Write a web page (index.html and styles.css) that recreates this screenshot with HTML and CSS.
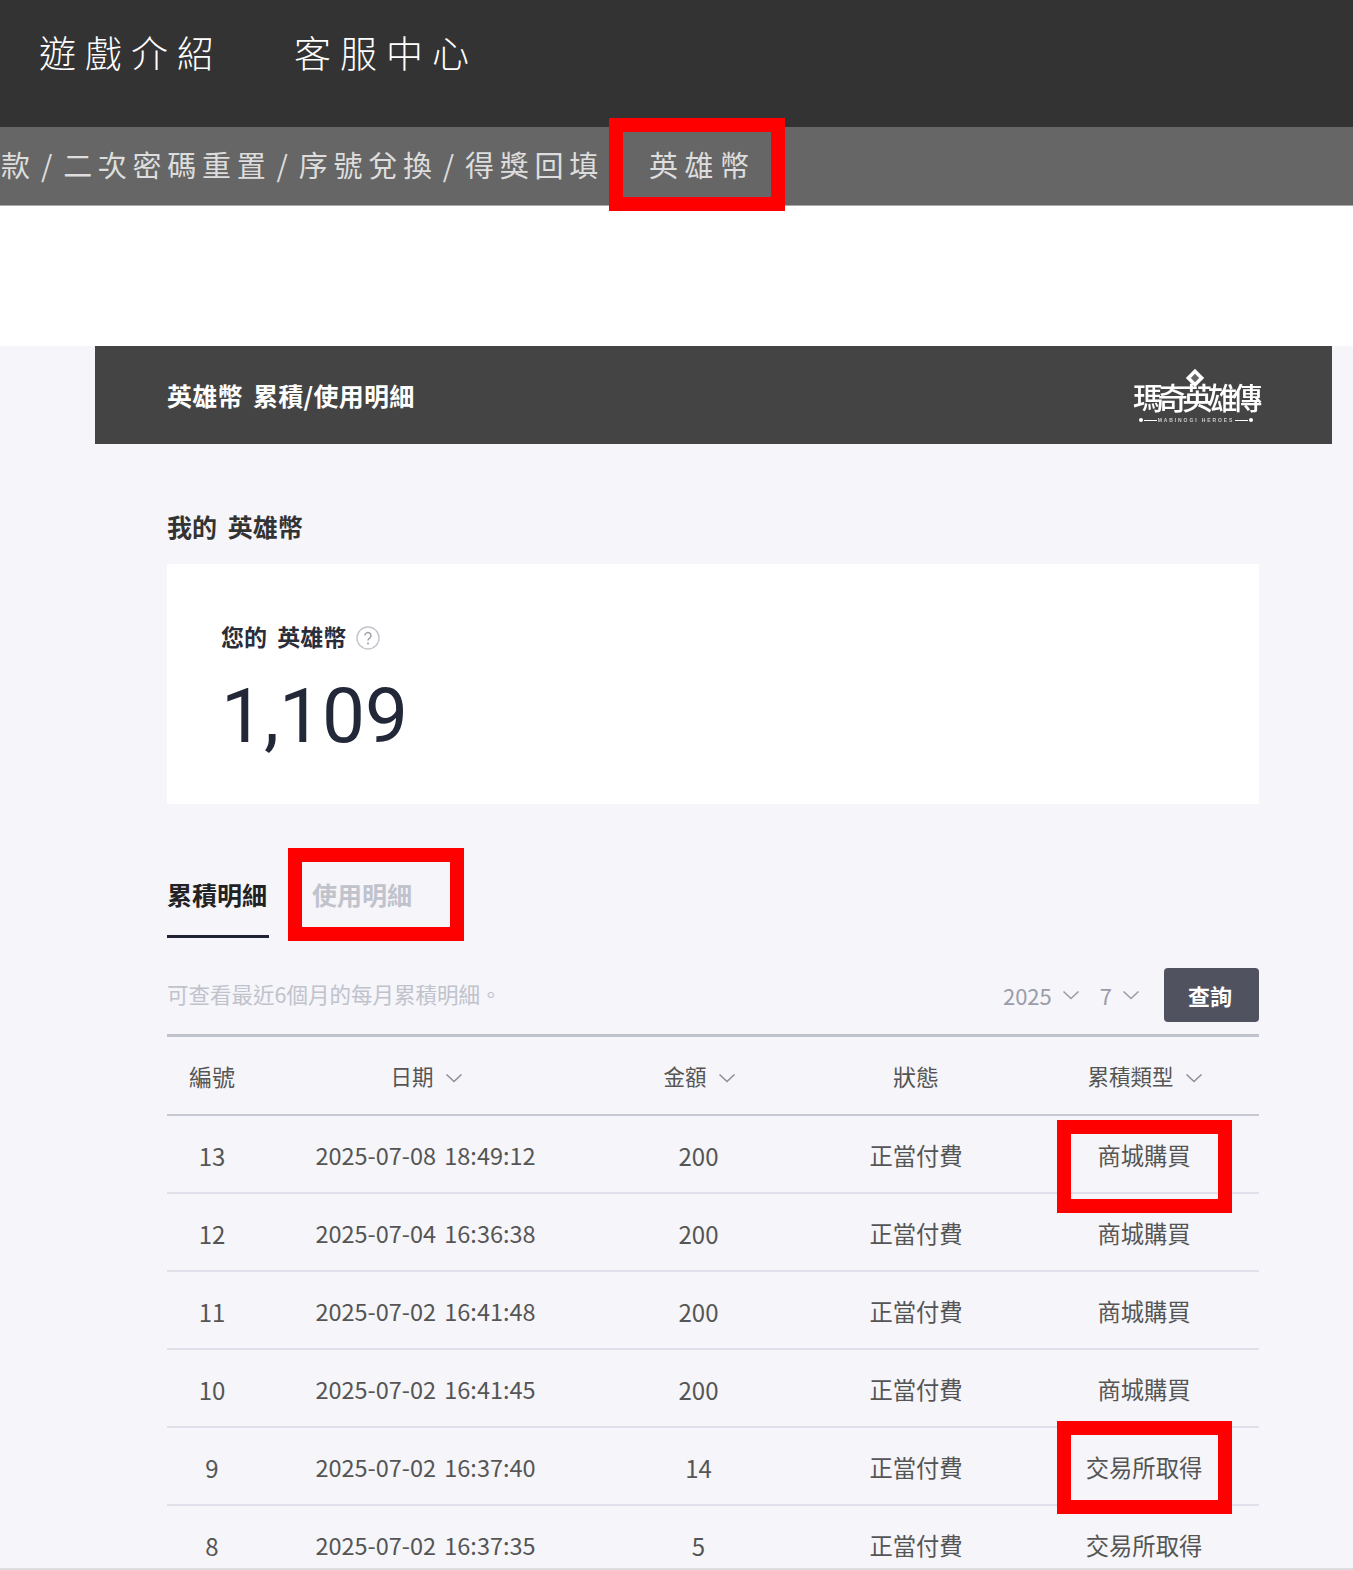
FILE: index.html
```html
<!DOCTYPE html>
<html lang="zh-Hant">
<head>
<meta charset="utf-8">
<title>英雄幣 累積/使用明細</title>
<link rel="stylesheet" href="styles.css">
</head>
<body>
<div class="page">
  <header class="top-nav">
    <a class="top-link">遊戲介紹</a>
    <a class="top-link">客服中心</a>
  </header>
  <nav class="sub-nav">
    <span class="sub-trail">款 / 二次密碼重置 / 序號兌換 / 得獎回填</span>
    <span class="sub-active">英雄幣</span>
  </nav>
  <div class="spacer"></div>
  <main class="content">
    <div class="panel">
      <div class="banner">
        <h1 class="banner-title">英雄幣 累積/使用明細</h1>
        <div class="logo">
          <svg class="logo-mark" viewBox="0 0 24 24" width="20" height="20" aria-hidden="true">
            <path d="M12 1 23 12 12 23 1 12Z" fill="#fff"/>
            <path d="M12 7 17 12 12 17 7 12Z" fill="#666"/>
          </svg>
          <div class="logo-name">瑪奇英雄傳</div>
          <div class="logo-tag"><i class="logo-dot"></i><i class="logo-line"></i><span>MABINOGI HEROES</span><i class="logo-line"></i><i class="logo-dot"></i></div>
        </div>
      </div>
      <div class="body">
        <h2 class="section-title">我的 英雄幣</h2>
        <section class="balance-card">
          <div class="balance-label"><span>您的 英雄幣</span><svg class="help" viewBox="0 0 24 24" width="24" height="24" aria-hidden="true">
              <circle cx="12" cy="12" r="11" fill="none" stroke="#c4c6ce" stroke-width="1.4"/>
              <path d="M9 9.6a3 3 0 1 1 4.600 2.500c-1 .7-1.600 1.200-1.600 2.400" fill="none" stroke="#9a9ca6" stroke-width="1.4"/>
              <circle cx="12" cy="17.6" r="1" fill="#9a9ca6"/>
            </svg></div>
          <div class="balance-value">1,109</div>
        </section>
        <div class="tabs">
          <div class="tab tab-active">累積明細</div>
          <div class="tab">使用明細</div>
        </div>
        <div class="filter">
          <p class="filter-note">可查看最近6個月的每月累積明細。</p>
          <div class="filter-controls">
            <span class="select">2025
              <svg class="chev" viewBox="0 0 18 10" width="18" height="10"><path d="M1.500 1.500 9 8.500 16.500 1.500" fill="none" stroke="#9a9ca6" stroke-width="1.6"/></svg>
            </span>
            <span class="select">7
              <svg class="chev" viewBox="0 0 18 10" width="18" height="10"><path d="M1.500 1.500 9 8.500 16.500 1.500" fill="none" stroke="#9a9ca6" stroke-width="1.6"/></svg>
            </span>
            <button class="query">查詢</button>
          </div>
        </div>
        <table class="ledger">
          <colgroup>
            <col class="c1"><col class="c2"><col class="c3"><col class="c4"><col class="c5">
          </colgroup>
          <thead>
            <tr>
              <th class="plain">編號</th>
              <th>日期 <svg class="chev" viewBox="0 0 18 10" width="18" height="10"><path d="M1.500 1.500 9 8.500 16.500 1.500" fill="none" stroke="#8d8f99" stroke-width="1.600"/></svg></th>
              <th>金額 <svg class="chev" viewBox="0 0 18 10" width="18" height="10"><path d="M1.500 1.500 9 8.500 16.500 1.500" fill="none" stroke="#8d8f99" stroke-width="1.600"/></svg></th>
              <th class="plain">狀態</th>
              <th>累積類型 <svg class="chev" viewBox="0 0 18 10" width="18" height="10"><path d="M1.500 1.500 9 8.500 16.500 1.500" fill="none" stroke="#8d8f99" stroke-width="1.600"/></svg></th>
            </tr>
          </thead>
          <tbody>
            <tr><td>13</td><td class="when">2025-07-08 18:49:12</td><td>200</td><td class="zh">正當付費</td><td class="zh">商城購買</td></tr>
            <tr><td>12</td><td class="when">2025-07-04 16:36:38</td><td>200</td><td class="zh">正當付費</td><td class="zh">商城購買</td></tr>
            <tr><td>11</td><td class="when">2025-07-02 16:41:48</td><td>200</td><td class="zh">正當付費</td><td class="zh">商城購買</td></tr>
            <tr><td>10</td><td class="when">2025-07-02 16:41:45</td><td>200</td><td class="zh">正當付費</td><td class="zh">商城購買</td></tr>
            <tr><td>9</td><td class="when">2025-07-02 16:37:40</td><td>14</td><td class="zh">正當付費</td><td class="zh">交易所取得</td></tr>
            <tr><td>8</td><td class="when">2025-07-02 16:37:35</td><td>5</td><td class="zh">正當付費</td><td class="zh">交易所取得</td></tr>
          </tbody>
        </table>
      </div>
    </div>
  </main>
  <div class="mark mark-nav"></div>
  <div class="mark mark-tab"></div>
  <div class="mark mark-row mark-row1"></div>
  <div class="mark mark-row mark-row5"></div>
  <div class="bottom-edge"></div>
</div>
</body>
</html>
```
FILE: styles.css
```css
* { box-sizing: border-box; }
html, body { margin: 0; padding: 0; }
body {
  font-family: "Noto Sans CJK TC", "Noto Sans", sans-serif;
  background: #f5f5fa;
}
.page {
  position: relative;
  width: 1353px;
  height: 1570px;
  overflow: hidden;
  display: flex;
  flex-direction: column;
}
.top-nav {
  height: 127px;
  flex: none;
  background: #333;
  display: flex;
  gap: 71px;
  padding: 28px 0 0 39px;
}
.top-link {
  color: #fff;
  font-size: 37px;
  font-weight: 300;
  letter-spacing: 9px;
  line-height: 48px;
}
.sub-nav {
  height: 79px;
  flex: none;
  background: #666;
  border-bottom: 1px solid #aaa;
  display: flex;
  align-items: center;
  padding: 0 0 4px 1px;
  white-space: nowrap;
}
.sub-trail, .sub-active {
  color: #ddd;
  font-size: 29px;
  font-weight: 400;
  letter-spacing: 5.700px;
  line-height: 40px;
}
.sub-trail { word-spacing: -7px; }
.sub-active { margin-left: 45px; letter-spacing: 6.500px; }
.spacer { height: 140px; flex: none; background: #fff; }
.content {
  flex: 1;
  min-height: 0;
  padding: 0 21px 0 95px;
  background: #f5f5fa;
}
.banner {
  height: 98px;
  background: #444;
  display: flex;
  align-items: center;
  justify-content: space-between;
  padding: 0 73px 0 72px;
}
.banner-title {
  margin: 0;
  color: #fff;
  font-size: 25px;
  font-weight: 700;
  line-height: 32px;
  letter-spacing: 0.300px;
  word-spacing: 4px;
}
.logo {
  width: 126px;
  height: 60px;
  margin-top: 6px;
  position: relative;
  display: flex;
  flex-direction: column;
  align-items: center;
  filter: blur(0.4px);
}
.logo-mark { position: absolute; top: 0; left: 52px; }
.logo-name {
  width: 126px;
  margin-top: 13px;
  color: #fff;
  font-size: 30px;
  font-weight: 500;
  letter-spacing: -5.200px;
  line-height: 30px;
  white-space: nowrap;
}
.logo-tag {
  margin-top: 5px;
  display: flex;
  align-items: center;
  color: #ccc;
  font: 700 5px/8px "Liberation Sans", sans-serif;
  letter-spacing: 1.900px;
  white-space: nowrap;
}
.logo-line { width: 13px; height: 1px; background: #fff; margin: 0 1px; }
.logo-dot { width: 4px; height: 4px; border-radius: 50%; background: #fff; }
.body { padding: 0 73px 0 72px; }
.section-title {
  margin: 0;
  padding-top: 64px;
  color: #333;
  font-size: 25px;
  font-weight: 700;
  line-height: 36px;
  word-spacing: 5px;
}
.balance-card {
  margin-top: 20px;
  height: 240px;
  background: #fff;
  padding: 56px 0 0 54px;
}
.balance-label {
  display: flex;
  align-items: center;
  gap: 10px;
  color: #2a2d3a;
  font-size: 23px;
  font-weight: 700;
  line-height: 32px;
  word-spacing: 5px;
}
.help { margin-top: 4px; }
.balance-value {
  margin-top: 19px;
  color: #222838;
  font-family: Roboto, sans-serif;
  font-size: 76.500px;
  font-weight: 400;
  line-height: 90px;
}
.tabs {
  margin-top: 62px;
  display: flex;
  gap: 43px;
}
.tab {
  height: 72px;
  padding-top: 8px;
  color: #c0c2cc;
  font-size: 25px;
  font-weight: 700;
  line-height: 40px;
}
.tab-active {
  color: #222;
  padding-right: 2px;
  border-bottom: 3px solid #1f2333;
}
.filter {
  height: 99px;
  display: flex;
  justify-content: space-between;
  padding-top: 30px;
  border-bottom: 3px solid #c0c2cc;
}
.filter-note {
  margin: 0;
  color: #c0c2cc;
  font-size: 21.500px;
  line-height: 52px;
}
.filter-controls { display: flex; align-items: flex-start; }
.select {
  display: inline-flex;
  align-items: center;
  gap: 10px;
  height: 54px;
  margin-right: 20px;
  color: #9a9ca8;
  font-size: 22px;
}
.select:nth-child(2) { margin-right: 24px; }
.query {
  width: 95px;
  height: 54px;
  padding: 0 3px 0 0;
  border: 0;
  border-radius: 4px;
  background: #50535f;
  color: #fff;
  font: 700 22px "Noto Sans CJK TC", sans-serif;
}
.ledger {
  width: 100%;
  table-layout: fixed;
  border-collapse: collapse;
}
.c1 { width: 90px; }
.c2 { width: 337px; }
.c3 { width: 209px; }
.c4 { width: 226px; }
.ledger th {
  height: 78px;
  padding: 0 0 0 3px;
  border-bottom: 2px solid #c6c8d2;
  color: #555;
  font-size: 21.500px;
  font-weight: 400;
  text-align: center;
}
.ledger th.plain { padding-left: 0; font-size: 23px; }
.ledger th .chev { margin-left: 7px; vertical-align: 2px; }
.ledger td {
  height: 78px;
  padding: 2px 0 0;
  border-bottom: 2px solid #dfe0e9;
  color: #555;
  font-size: 24px;
  text-align: center;
}
.ledger td.when { font-size: 23.500px; word-spacing: 3px; }
.ledger td.zh { font-size: 23.300px; }
.mark {
  position: absolute;
  width: 176px;
  height: 93px;
  border: 14px solid #f00;
  pointer-events: none;
}
.mark-row { width: 175px; }
.mark-nav { left: 609px; top: 118px; }
.mark-tab { left: 288px; top: 848px; }
.mark-row1 { left: 1057px; top: 1120px; }
.mark-row5 { left: 1057px; top: 1421px; }
.bottom-edge {
  position: absolute;
  left: 0;
  right: 0;
  bottom: 0;
  height: 2px;
  background: #ddd;
}
```
